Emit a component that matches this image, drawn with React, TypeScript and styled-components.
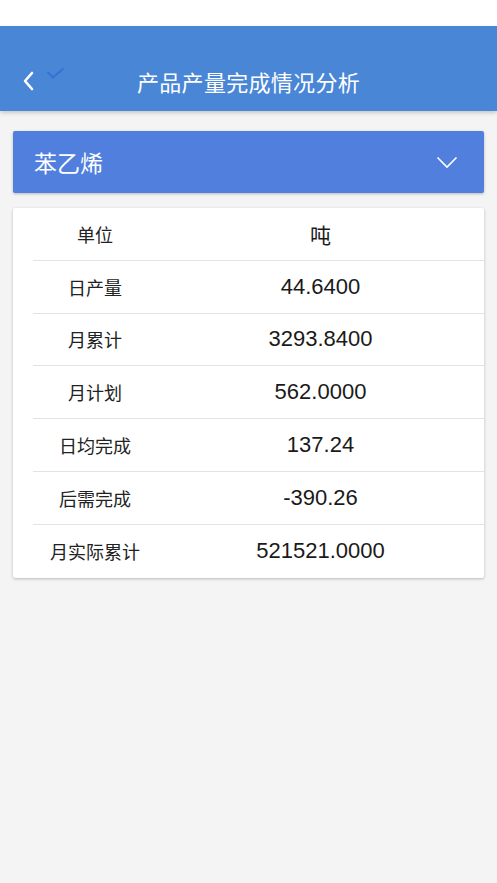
import styled, { createGlobalStyle } from "styled-components";
import React from "react";

const GlobalStyle = createGlobalStyle`
  html, body {
    margin: 0;
    padding: 0;
    background: #f4f4f4;
    font-family: "Noto Sans CJK SC", "Liberation Sans", sans-serif;
  }
`;

const Page = styled.div`
  min-height: 883px;
  background: #f4f4f4;
`;

const StatusBar = styled.div`
  height: 26px;
  background: #ffffff;
`;

const Header = styled.div`
  height: 85px;
  background: #4a86d6;
  display: flex;
  align-items: center;
  justify-content: center;
  position: relative;
  box-shadow: 0 2px 4px rgba(0, 0, 0, 0.18);
  padding-top: 24px;
  box-sizing: border-box;
`;

const Title = styled.div`
  color: #ffffff;
  font-size: 22px;
  letter-spacing: 0.3px;
`;

const BackButton = styled.div`
  position: absolute;
  left: 22px;
  top: 45px;
  width: 14px;
  height: 20px;
`;

const Tick = styled.div`
  position: absolute;
  left: 46px;
  top: 35px;
`;

const Content = styled.div`
  padding: 20px 13px;
  display: flex;
  flex-direction: column;
  gap: 15px;
`;

const Select = styled.div`
  height: 62px;
  background: #507fde;
  border-radius: 2px;
  box-shadow: 0 1px 3px rgba(0, 0, 0, 0.25);
  display: flex;
  align-items: center;
  justify-content: space-between;
  padding: 0 26px 0 21px;
  color: #ffffff;
  font-size: 23px;
`;

const Card = styled.div`
  background: #ffffff;
  border-radius: 2px;
  box-shadow: 0 1px 3px rgba(0, 0, 0, 0.25);
  padding-left: 20px;
`;

const Row = styled.div<{ last?: boolean }>`
  display: flex;
  align-items: center;
  box-sizing: border-box;
  height: 52.8px;
  border-bottom: ${(p) => (p.last ? "none" : "1px solid #e3e3e3")};
`;

const Label = styled.div`
  width: 124px;
  text-align: center;
  font-size: 18px;
  color: #222;
`;

const Value = styled.div<{ unit?: boolean }>`
  flex: 1;
  text-align: center;
  font-size: ${(p) => (p.unit ? "21px" : "22px")};
  color: #1a1a1a;
  font-family: ${(p) =>
    p.unit
      ? `"Noto Sans CJK SC", sans-serif`
      : `"Liberation Sans", "Noto Sans CJK SC", sans-serif`};
`;

const rows = [
  ["单位", "吨"],
  ["日产量", "44.6400"],
  ["月累计", "3293.8400"],
  ["月计划", "562.0000"],
  ["日均完成", "137.24"],
  ["后需完成", "-390.26"],
  ["月实际累计", "521521.0000"],
];

export default function App() {
  return (
    <Page>
      <GlobalStyle />
      <StatusBar />
      <Header>
        <BackButton>
          <svg width="14" height="20" viewBox="0 0 14 20">
            <polyline
              points="10,2 3,10 10,18"
              fill="none"
              stroke="#fff"
              strokeWidth="2.6"
              strokeLinecap="round"
              strokeLinejoin="round"
            />
          </svg>
        </BackButton>
        <Tick>
          <svg width="19" height="13" viewBox="0 0 19 13">
            <polyline
              points="1.5,5 7,10.5 17.5,1.5"
              fill="none"
              stroke="#3470d6"
              strokeWidth="1.8"
            />
          </svg>
        </Tick>
        <Title>产品产量完成情况分析</Title>
      </Header>
      <Content>
        <Select>
          <span>苯乙烯</span>
          <svg width="22" height="13" viewBox="0 0 22 13">
            <polyline
              points="1.5,1.5 11,11 20.5,1.5"
              fill="none"
              stroke="#fff"
              strokeWidth="1.6"
            />
          </svg>
        </Select>
        <Card>
          {rows.map(([k, v], i) => (
            <Row key={k} last={i === rows.length - 1}>
              <Label>{k}</Label>
              <Value unit={i === 0}>{v}</Value>
            </Row>
          ))}
        </Card>
      </Content>
    </Page>
  );
}
